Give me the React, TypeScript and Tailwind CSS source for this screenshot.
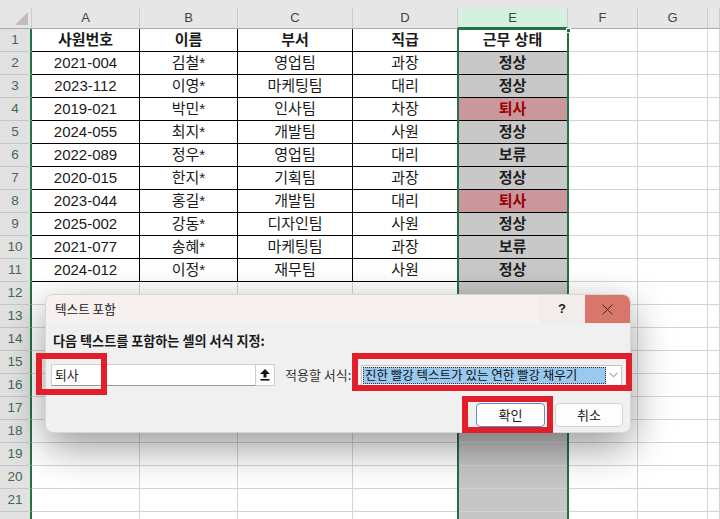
import React from 'react';

const COLS = ['A', 'B', 'C', 'D', 'E', 'F', 'G', ''];

const DATA: string[][] = [
  ['사원번호', '이름', '부서', '직급', '근무 상태'],
  ['2021-004', '김철*', '영업팀', '과장', '정상'],
  ['2023-112', '이영*', '마케팅팀', '대리', '정상'],
  ['2019-021', '박민*', '인사팀', '차장', '퇴사'],
  ['2024-055', '최지*', '개발팀', '사원', '정상'],
  ['2022-089', '정우*', '영업팀', '대리', '보류'],
  ['2020-015', '한지*', '기획팀', '과장', '정상'],
  ['2023-044', '홍길*', '개발팀', '대리', '퇴사'],
  ['2025-002', '강동*', '디자인팀', '사원', '정상'],
  ['2021-077', '송혜*', '마케팅팀', '과장', '보류'],
  ['2024-012', '이정*', '재무팀', '사원', '정상'],
];

const ROWS = Array.from({ length: 22 }, (_, i) => i + 1);

function cellClass(r: number, c: number) {
  const inTable = r <= 11 && c <= 4;
  const status = r >= 2 && r <= 11 ? DATA[r - 1][4] : '';
  let cls = inTable ? 'border-r-black border-b-black ' : 'border-r-[#d4d4d4] border-b-[#d4d4d4] ';
  if (c === 4) {
    if (r === 1) cls += 'bg-white font-bold text-[#1a1a1a] ';
    else if (status === '퇴사') cls += 'bg-[#c9979c] font-bold text-[#9c0006] ';
    else if (status) cls += 'bg-[#c8c8c8] font-bold text-[#1f1f1f] ';
    else cls += 'bg-[#c6c6c6] border-b-[#b5b5b5] ';
  } else {
    cls += 'bg-white text-[#1a1a1a] ';
    if (r === 1) cls += 'font-bold ';
  }
  return cls;
}

function UploadIcon() {
  return (
    <svg width="10" height="12" viewBox="0 0 10 12">
      <polygon points="5,0 10,5 6.5,5 6.5,8.5 3.5,8.5 3.5,5 0,5" fill="#111" />
      <rect x="0.5" y="10" width="9" height="1.6" fill="#111" />
    </svg>
  );
}

export default function App() {
  return (
    <div className="relative w-[720px] h-[519px] overflow-hidden bg-white font-['Liberation_Sans','Noto_Sans_CJK_KR',sans-serif]">
      <div className="h-[8px] bg-[#e6e6e6]" />
      <div className="grid grid-cols-[32px_108px_98px_115px_105px_110px_70px_70px_1fr]">
        {/* column headers */}
        <div className="relative h-[21px] bg-[#e6e6e6] border-r border-b border-r-[#cacaca] border-b-[#ababab]">
          <svg className="absolute right-[3px] bottom-[3px]" width="13" height="13" viewBox="0 0 13 13">
            <polygon points="13,0 13,13 0,13" fill="#bdbdbd" />
          </svg>
        </div>
        {COLS.map((col, i) =>
          i === 4 ? (
            <div key={i} className="h-[21px] bg-[#d3f0e0] border-r border-r-[#cacaca] border-b-2 border-b-[#217346] flex items-center justify-center text-[13px] text-[#1f5a36]">
              {col}
            </div>
          ) : (
            <div key={i} className="h-[21px] bg-[#e6e6e6] border-r border-r-[#cacaca] border-b border-b-[#ababab] flex items-center justify-center text-[13px] text-[#444]">
              {col}
            </div>
          )
        )}

        {ROWS.map(r => (
          <React.Fragment key={r}>
            <div className="h-[23px] bg-[#e1e1e1] border-r-2 border-r-[#217346] border-b border-b-[#c6c6c6] flex items-center justify-center pt-px text-[13.5px] text-[#3f6b50]">
              {r <= 21 ? r : ''}
            </div>
            {COLS.map((_, c) => (
              <div key={c} className={`h-[23px] border-r border-b flex items-center justify-center pt-px text-[15px] whitespace-nowrap ${cellClass(r, c)}`}>
                {r <= 11 && c <= 4 ? DATA[r - 1][c] : ''}
              </div>
            ))}
          </React.Fragment>
        ))}
      </div>

      {/* column E selection */}
      <div className="absolute left-[457px] top-[28px] w-[112px] h-[520px] border-2 border-[#217346]" />
      <div className="absolute left-[566px] top-[28px] w-[5px] h-[5px] bg-[#217346] border border-white" />

      {/* dialog */}
      <div className="absolute left-[45px] top-[294px] w-[586px] h-[139px] rounded-lg bg-[#f0f0f0] border border-[#d6d6d6] overflow-hidden shadow-[0_14px_40px_rgba(0,0,0,0.4)] flex flex-col font-['Noto_Sans_CJK_KR',sans-serif] text-[13px] text-[#1a1a1a]">
        <div className="h-[28px] flex items-center bg-[#f6f0ef] shrink-0">
          <span className="pl-[9px] flex-1 text-[12.6px]">텍스트 포함</span>
          <div className="w-[46px] h-full flex items-center justify-center bg-[#f2ecea] text-[13px] font-['Liberation_Sans',sans-serif] font-bold">?</div>
          <div className="w-[45px] h-full flex items-center justify-center bg-[#d9766b]">
            <svg width="11" height="11" viewBox="0 0 11 11">
              <path d="M0.5 0.5 L10.5 10.5 M10.5 0.5 L0.5 10.5" stroke="#3a2a28" strokeWidth="1" />
            </svg>
          </div>
        </div>

        <div className="mt-[10px] pl-[7px] h-[16px] leading-[16px] font-bold text-[13.1px]">다음 텍스트를 포함하는 셀의 서식 지정:</div>

        <div className="mt-[15px] pl-[5px] pr-[8px] h-[22px] flex items-center">
          <div className="w-[205px] h-[22px] bg-white border border-[#cfcfcf] border-b-[#9a9a9a] flex items-center pl-[3px] text-[12.8px]">퇴사</div>
          <div className="w-[19px] h-[22px] bg-[#fdfdfd] border border-l-0 border-[#cfcfcf] flex items-center justify-center">
            <UploadIcon />
          </div>
          <span className="ml-[10px] w-[76px] whitespace-nowrap text-[#333]">적용할 서식:</span>
          <div className="w-[261px] h-[21px] bg-white border border-[#c4c4c4] flex items-center pl-px">
            <div className="w-[243px] h-[17px] bg-[#99c9ef] border border-dotted border-[#333] flex items-center pl-px whitespace-nowrap text-[12.5px] text-[#111]">
              진한 빨강 텍스트가 있는 연한 빨강 채우기
            </div>
            <div className="flex-1 flex items-center justify-center">
              <svg width="9" height="6" viewBox="0 0 9 6">
                <path d="M0.5 0.8 L4.5 4.8 L8.5 0.8" stroke="#7a7a7a" strokeWidth="1" fill="none" />
              </svg>
            </div>
          </div>
        </div>

        <div className="mt-[17px] pr-[7px] flex justify-end gap-[10px]">
          <button className="w-[69px] h-[24px] rounded-[4px] bg-white border border-[#5b8fcb] text-[13px]">확인</button>
          <button className="w-[68px] h-[24px] rounded-[4px] bg-[#fdfdfd] border border-[#d2d2d2] text-[13px]">취소</button>
        </div>
      </div>

      {/* annotation boxes */}
      <div className="absolute left-[36px] top-[353px] w-[71px] h-[42px] border-[6px] border-[#e01f2b]" />
      <div className="absolute left-[352px] top-[353px] w-[280px] h-[38px] border-[6px] border-[#e01f2b]" />
      <div className="absolute left-[462px] top-[396px] w-[91px] h-[37px] border-[6px] border-[#e01f2b]" />
    </div>
  );
}
